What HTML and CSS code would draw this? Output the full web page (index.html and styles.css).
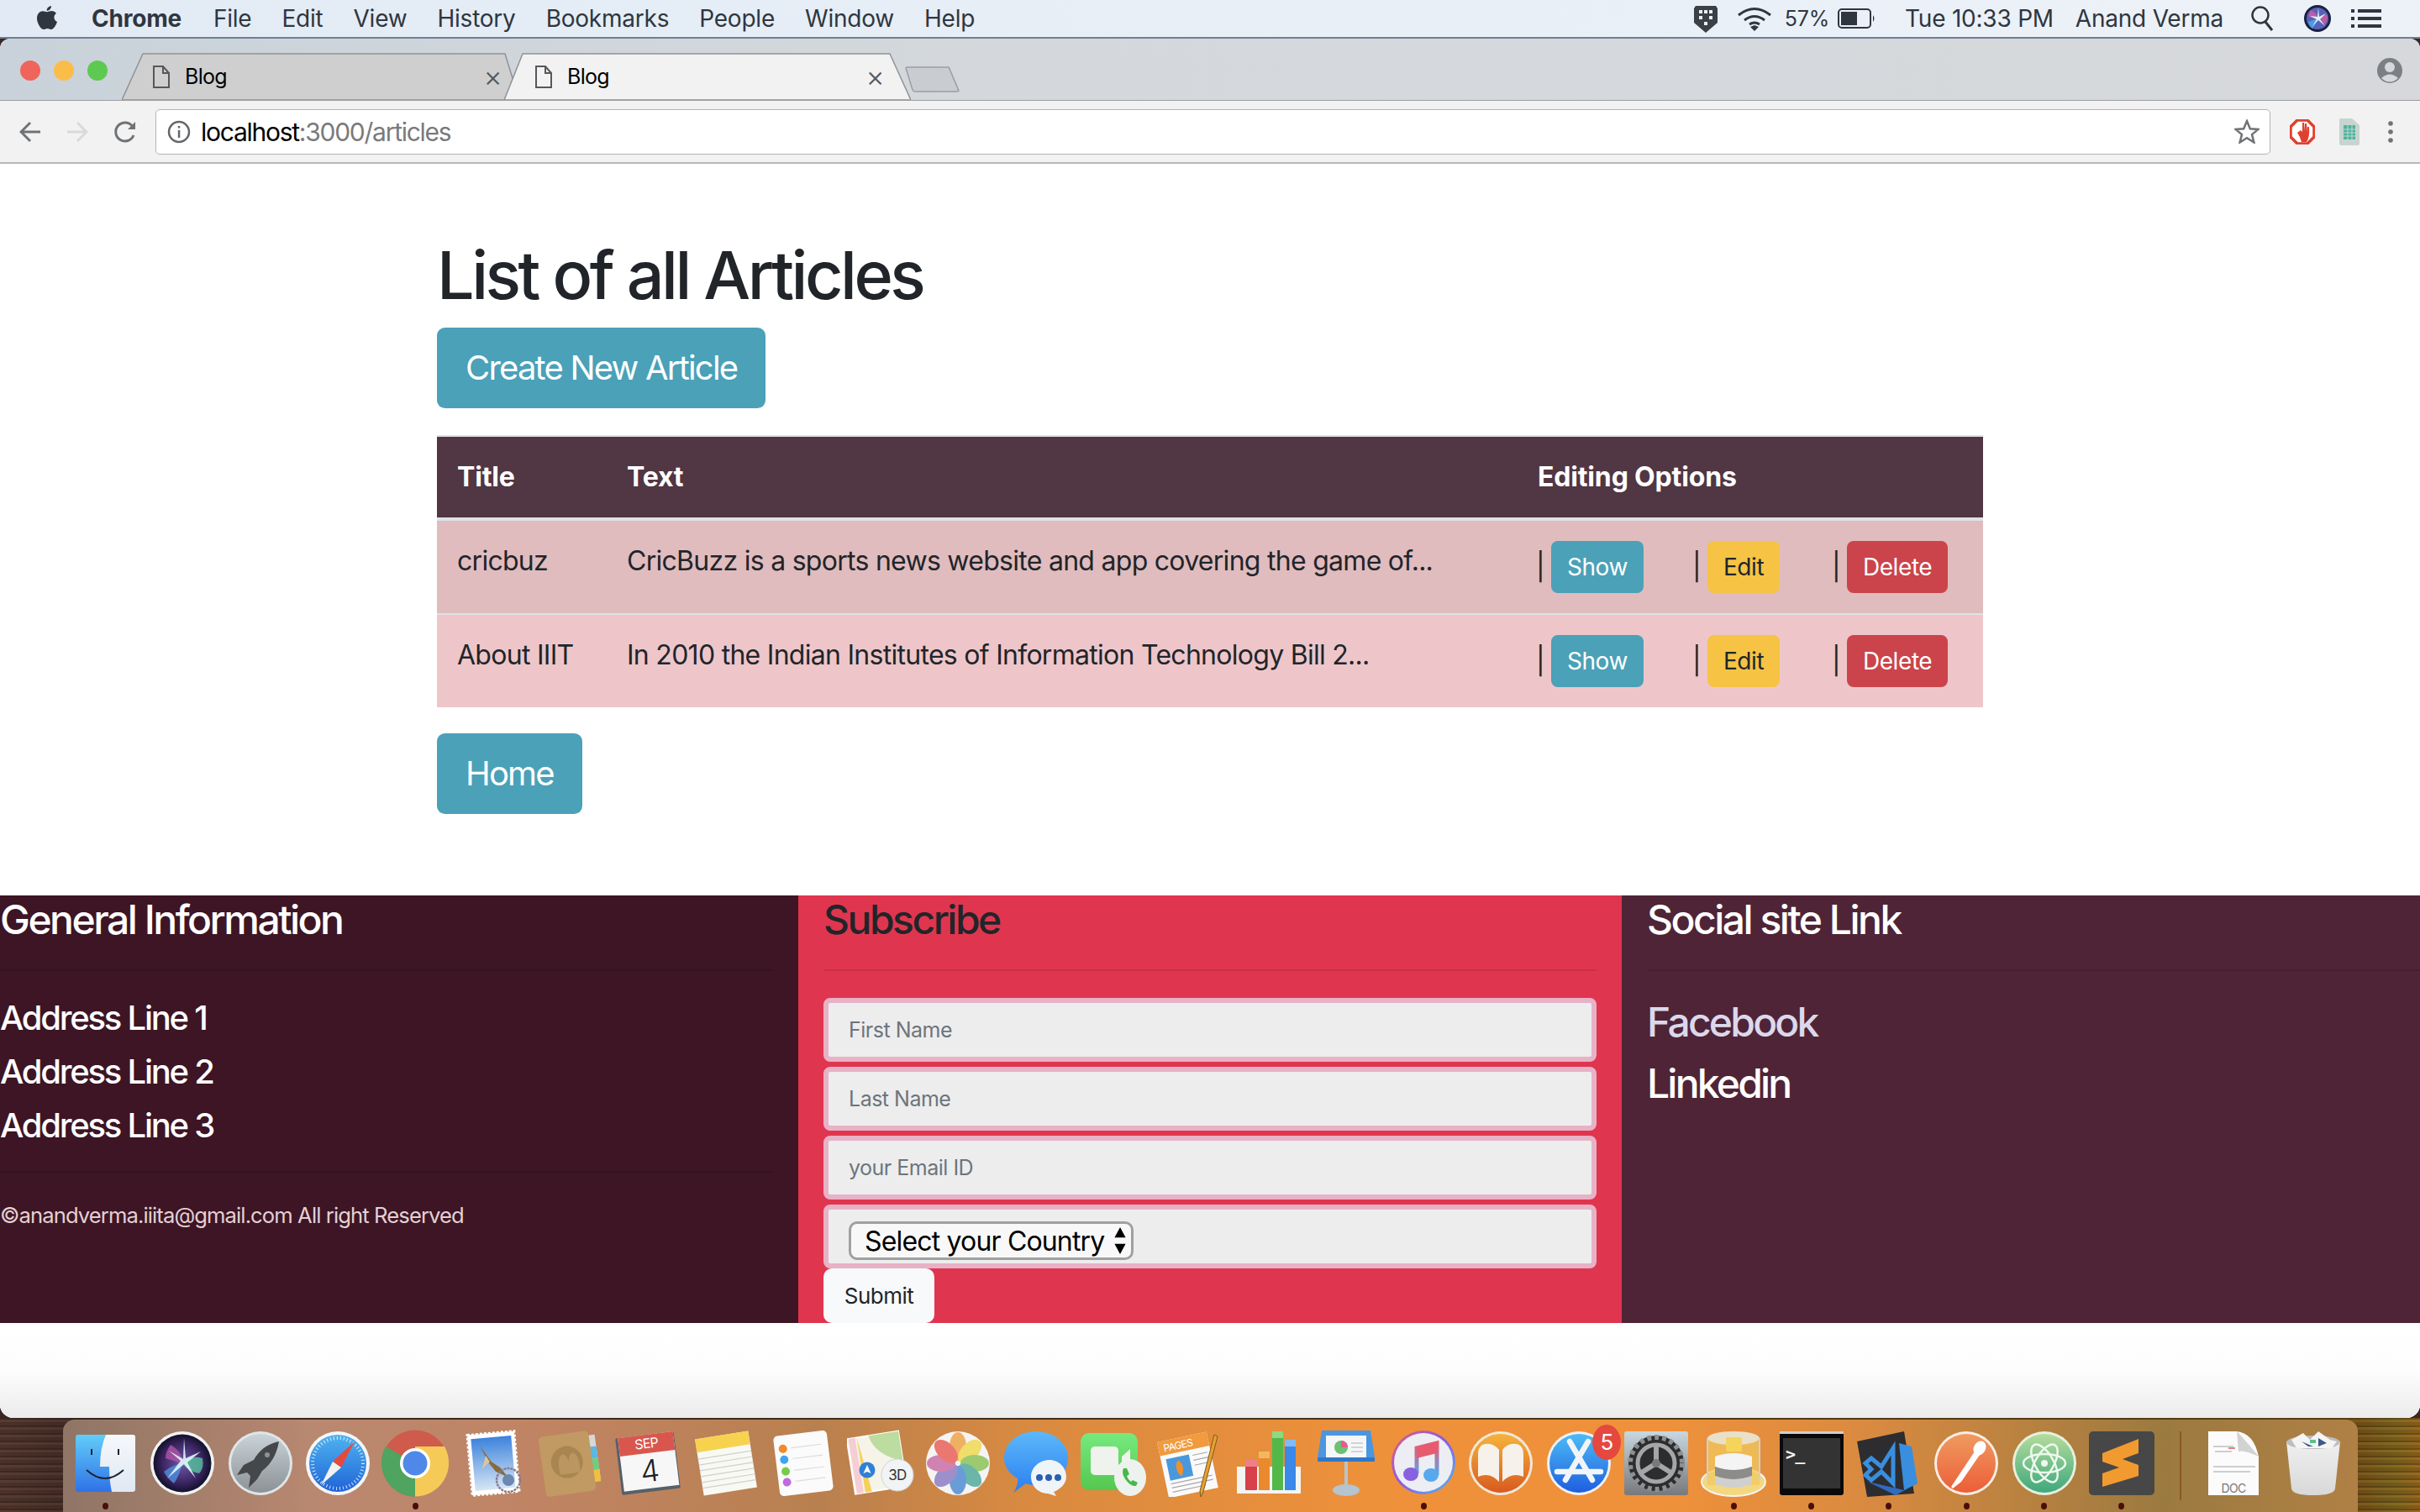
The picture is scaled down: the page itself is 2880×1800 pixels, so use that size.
FILE: index.html
```html
<!DOCTYPE html>
<html lang="en">
<head>
    <meta charset="UTF-8">
    <title>Blog</title>
    <link rel="stylesheet" href="styles.css">
</head>
<body>
    <svg class="defs" width="0" height="0">
        <defs>
            <linearGradient id="gFinder" x1="0" y1="0" x2="0" y2="1"><stop offset="0" stop-color="#62cdf9"/><stop offset="1" stop-color="#2f72e8"/></linearGradient>
            <linearGradient id="gFace" x1="0" y1="0" x2="0" y2="1"><stop offset="0" stop-color="#f6f8fb"/><stop offset="1" stop-color="#dfe8f3"/></linearGradient>
            <radialGradient id="gSiri"><stop offset="0" stop-color="#6e5aa8"/><stop offset=".7" stop-color="#3a2360"/><stop offset="1" stop-color="#10122a"/></radialGradient>
            <linearGradient id="gRocket" x1="0" y1="0" x2="0" y2="1"><stop offset="0" stop-color="#c9d3d8"/><stop offset="1" stop-color="#8c9296"/></linearGradient>
            <linearGradient id="gSafari" x1="0" y1="0" x2="0" y2="1"><stop offset="0" stop-color="#4fb4ef"/><stop offset="1" stop-color="#1f63d8"/></linearGradient>
            <linearGradient id="gSky" x1="0" y1="0" x2="0" y2="1"><stop offset="0" stop-color="#3d83dc"/><stop offset="1" stop-color="#d6e6f5"/></linearGradient>
            <linearGradient id="gMsg" x1="0" y1="0" x2="0" y2="1"><stop offset="0" stop-color="#5cb8fa"/><stop offset="1" stop-color="#2c7ff0"/></linearGradient>
            <linearGradient id="gFace2" x1="0" y1="0" x2="0" y2="1"><stop offset="0" stop-color="#77ea7f"/><stop offset="1" stop-color="#54c84f"/></linearGradient>
            <linearGradient id="gMusic" x1="0" y1="0" x2="0" y2="1"><stop offset="0" stop-color="#ea5a6e"/><stop offset="1" stop-color="#5aa5ee"/></linearGradient>
            <linearGradient id="gRing" x1="0" y1="0" x2="1" y2="1"><stop offset="0" stop-color="#e85a78"/><stop offset=".5" stop-color="#8a5ae8"/><stop offset="1" stop-color="#4ac0ee"/></linearGradient>
            <linearGradient id="gBooks" x1="0" y1="0" x2="0" y2="1"><stop offset="0" stop-color="#f5b33c"/><stop offset="1" stop-color="#d85a20"/></linearGradient>
            <linearGradient id="gStore" x1="0" y1="0" x2="0" y2="1"><stop offset="0" stop-color="#4cbcf5"/><stop offset="1" stop-color="#1f5ee0"/></linearGradient>
            <linearGradient id="gPrefs" x1="0" y1="0" x2="0" y2="1"><stop offset="0" stop-color="#c9d7e0"/><stop offset="1" stop-color="#77797c"/></linearGradient>
            <linearGradient id="gPostman" x1="0" y1="0" x2="0" y2="1"><stop offset="0" stop-color="#f09a60"/><stop offset="1" stop-color="#ec5e38"/></linearGradient>
            <linearGradient id="gAtom" x1="0" y1="0" x2="0" y2="1"><stop offset="0" stop-color="#b4dc9c"/><stop offset="1" stop-color="#3fa87c"/></linearGradient>
            <linearGradient id="gTrash" x1="0" y1="0" x2="0" y2="1"><stop offset="0" stop-color="#f0f0f0"/><stop offset="1" stop-color="#d8d8d8"/></linearGradient>
        </defs>
    </svg>

    <!-- mac menu bar -->
    <header class="menubar">
        <svg class="apple" viewBox="0 0 26 32"><path fill="#2f3640" d="M18 1c.3 3-2.500 6-5.300 5.800C12.300 4 15 1.300 18 1zM13 8.300c1.500 0 3-1.200 5.300-1.200 1.500 0 4.200.6 5.700 3-3.800 2.400-3.300 8 1 10-1 3-4 9-7 9-1.600 0-2.400-1.100-4.500-1.100s-3 1.100-4.600 1.100C5.500 29.100 1 21.500 1 16c0-5.300 3.400-8.700 6.900-8.700 2.200 0 3.800 1 5.100 1z"/></svg>
        <nav class="menu">
            <span class="app-name">Chrome</span>
            <span>File</span>
            <span>Edit</span>
            <span>View</span>
            <span>History</span>
            <span>Bookmarks</span>
            <span>People</span>
            <span>Window</span>
            <span>Help</span>
        </nav>
        <div class="status">
            <svg class="st-shield" viewBox="0 0 30 34"><path fill="#3a4048" d="M3 2h24l2 3v17l-14 12L1 22V5z"/><g fill="#e9eef5"><rect x="7" y="7" width="4" height="4"/><rect x="13" y="7" width="4" height="4"/><rect x="19" y="7" width="4" height="4"/><rect x="7" y="14" width="4" height="4"/><rect x="19" y="14" width="4" height="4"/><rect x="13" y="21" width="4" height="4"/></g></svg>
            <svg class="st-wifi" viewBox="0 0 42 30"><g fill="none" stroke="#2f3640" stroke-width="3"><path d="M2 11q19-15 38 0"/><path d="M9 17q12-9 24 0"/><path d="M15 22q6-4 12 0"/></g><path fill="#2f3640" d="M16 25l5-2 5 2-5 5z"/></svg>
            <span class="st-pct">57%</span>
            <svg class="st-batt" viewBox="0 0 46 24"><rect x="1" y="1" width="38" height="22" rx="4" fill="none" stroke="#2f3640" stroke-width="2"/><rect x="4" y="4" width="19" height="16" fill="#2f3640"/><path fill="#2f3640" d="M42 8q3 4 0 8z"/></svg>
            <span class="st-time">Tue 10:33 PM</span>
            <span class="st-user">Anand Verma</span>
            <svg class="st-search" viewBox="0 0 28 32"><circle cx="12" cy="12" r="9.500" fill="none" stroke="#2f3640" stroke-width="2.500"/><path d="M18 20l8 10" stroke="#2f3640" stroke-width="3"/></svg>
            <svg class="st-siri" viewBox="0 0 32 32"><circle cx="16" cy="16" r="16" fill="#1a2040"/><circle cx="16" cy="16" r="13" fill="#5a62b8"/><path d="M8 6q8 4 8 10-8-1-11-3zM16 16q6-6 12-4 0 8-4 11z" fill="#c05aa8"/><path d="M16 16q-2 8-6 12-4-3-5-8z" fill="#4f9ae0"/><path d="M17 3l1 11 8-4-7 7 6 8-8-7-7 7 5-8-8-4 9 1z" fill="#d8f4f8"/></svg>
            <svg class="st-list" viewBox="0 0 36 22"><g fill="#2f3640"><rect width="4" height="4"/><rect y="9" width="4" height="4"/><rect y="18" width="4" height="4"/><rect x="8" width="28" height="4"/><rect x="8" y="9" width="28" height="4"/><rect x="8" y="18" width="28" height="4"/></g></svg>
        </div>
    </header>

    <div class="window">
        <!-- tab strip -->
        <div class="tabstrip">
            <div class="lights">
                <span class="light red"></span>
                <span class="light yellow"></span>
                <span class="light green"></span>
            </div>
            <div class="tab tab-back">
                <svg class="tab-shape" viewBox="0 0 473 56" preserveAspectRatio="none"><path d="M0 56L25 1H456L473 56z" fill="#cfcfcf" stroke="#8f9296" stroke-width="1.500"/></svg>
                <svg class="page-icon" viewBox="0 0 20 27"><path d="M1 1h11l7 8v17H1z M12 1v8h7" fill="none" stroke="#55585c" stroke-width="2"/></svg>
                <span class="tab-title">Blog</span>
                <span class="tab-close">×</span>
            </div>
            <div class="tab tab-front">
                <svg class="tab-shape" viewBox="0 0 484 56" preserveAspectRatio="none"><path d="M0 56L22 1H459L484 56z" fill="#f2f2f2" stroke="#8f9296" stroke-width="1.500"/></svg>
                <svg class="page-icon" viewBox="0 0 20 27"><path d="M1 1h11l7 8v17H1z M12 1v8h7" fill="none" stroke="#55585c" stroke-width="2"/></svg>
                <span class="tab-title">Blog</span>
                <span class="tab-close">×</span>
            </div>
            <svg class="new-tab" viewBox="0 0 65 31"><path d="M1 2q0-1 2-1h48q2 0 2 2l11 26q0 1-2 1H12q-2 0-3-2z" fill="#c9cdd1" stroke="#9a9da1" stroke-width="1.500"/></svg>
            <svg class="profile" viewBox="0 0 30 30"><circle cx="15" cy="15" r="15" fill="#7c8084"/><circle cx="15" cy="11" r="6" fill="#d6d8db"/><path d="M5 24q10-9 20 0q-10 9-20 0" fill="#d6d8db"/></svg>
        </div>

        <!-- address bar -->
        <div class="toolbar">
            <svg class="tb-back" viewBox="0 0 26 26"><path d="M25 13H3M13 2L2 13l11 11" fill="none" stroke="#6f7377" stroke-width="3"/></svg>
            <svg class="tb-forward" viewBox="0 0 26 26"><path d="M1 13h22M13 2l11 11-11 11" fill="none" stroke="#dadada" stroke-width="3"/></svg>
            <svg class="tb-reload" viewBox="0 0 28 28"><path d="M24 18a11 11 0 1 1-1-10" fill="none" stroke="#6f7377" stroke-width="3"/><path d="M26 2v9h-9z" fill="#6f7377"/></svg>
            <div class="omnibox">
                <svg class="omni-info" viewBox="0 0 28 28"><circle cx="14" cy="14" r="12" fill="none" stroke="#63676b" stroke-width="2.500"/><rect x="12.800" y="12" width="2.500" height="9" fill="#63676b"/><rect x="12.800" y="7" width="2.500" height="2.500" fill="#63676b"/></svg>
                <span class="url"><span class="url-host">localhost</span>:3000/articles</span>
                <svg class="omni-star" viewBox="0 0 30 29"><path d="M15 2l3.800 9.200 9.700.7-7.500 6.200 2.400 9.400-8.400-5.200-8.400 5.200 2.400-9.400-7.500-6.200 9.700-.7z" fill="none" stroke="#6f7377" stroke-width="2.500"/></svg>
            </div>
            <svg class="ext-block" viewBox="0 0 30 30"><path d="M9 1h12l8 8v12l-8 8H9l-8-8V9z" fill="#fff" stroke="#e0402f" stroke-width="3.500"/><path d="M9 16q3 4 5 11h6q4-6 3-18h-2v6l-1-10h-2v9l-1-10h-2v11l-2-2z" fill="#e0402f"/></svg>
            <svg class="ext-sheet" viewBox="0 0 24 32"><path d="M0 2q0-2 2-2h13l9 8v22q0 2-2 2H2q-2 0-2-2z" fill="#c8d4d0"/><g fill="#4cb59e"><rect x="5" y="8" width="14" height="17"/></g><path d="M5 13h14M5 17h14M5 21h14M10 8v17M15 8v17" stroke="#c8d4d0"/></svg>
            <svg class="ext-more" viewBox="0 0 6 26"><circle cx="3" cy="3" r="2.800" fill="#6f7377"/><circle cx="3" cy="13" r="2.800" fill="#6f7377"/><circle cx="3" cy="23" r="2.800" fill="#6f7377"/></svg>
        </div>

        <!-- page -->
        <main class="page">
            <div class="container">
                <h1>List of all Articles</h1>
                <a class="btn btn-lg btn-info">Create New Article</a>
                <table class="articles">
                    <colgroup><col class="col-title"><col class="col-text"><col class="col-options"></colgroup>
                    <thead>
                        <tr><th>Title</th><th>Text</th><th>Editing Options</th></tr>
                    </thead>
                    <tbody>
                        <tr class="row-one">
                            <td>cricbuz</td>
                            <td>CricBuzz is a sports news website and app covering the game of...</td>
                            <td>
                                <div class="options">
                                    <div class="opt opt-show">| <a class="btn btn-info">Show</a></div>
                                    <div class="opt opt-edit">| <a class="btn btn-warning">Edit</a></div>
                                    <div class="opt">| <a class="btn btn-danger">Delete</a></div>
                                </div>
                            </td>
                        </tr>
                        <tr class="row-two">
                            <td>About IIIT</td>
                            <td>In 2010 the Indian Institutes of Information Technology Bill 2...</td>
                            <td>
                                <div class="options">
                                    <div class="opt opt-show">| <a class="btn btn-info">Show</a></div>
                                    <div class="opt opt-edit">| <a class="btn btn-warning">Edit</a></div>
                                    <div class="opt">| <a class="btn btn-danger">Delete</a></div>
                                </div>
                            </td>
                        </tr>
                    </tbody>
                </table>
                <a class="btn btn-lg btn-info">Home</a>
            </div>

            <footer class="site-footer">
                <section class="foot-col foot-info">
                    <h4>General Information</h4>
                    <hr>
                    <h5>Address Line 1</h5>
                    <h5>Address Line 2</h5>
                    <h5>Address Line 3</h5>
                    <hr>
                    <small class="copyright">©anandverma.iiita@gmail.com All right Reserved</small>
                </section>
                <section class="foot-col foot-subscribe">
                    <h4>Subscribe</h4>
                    <hr>
                    <form>
                        <input class="field" type="text" placeholder="First Name">
                        <input class="field" type="text" placeholder="Last Name">
                        <input class="field" type="text" placeholder="your Email ID">
                        <div class="field field-select">
                            <div class="select-wrap">
                                <select><option>Select your Country</option></select>
                                <svg class="select-arrows" viewBox="0 0 14 34"><path d="M7 0l7 13H0zM7 34L0 21h14z" fill="#000"/></svg>
                            </div>
                        </div>
                        <button class="btn-submit" type="button">Submit</button>
                    </form>
                </section>
                <section class="foot-col foot-social">
                    <h4>Social site Link</h4>
                    <hr>
                    <a class="social-link visited">Facebook</a>
                    <a class="social-link">Linkedin</a>
                </section>
            </footer>
            <div class="page-end"></div>
        </main>
    </div>

    <!-- desktop and dock -->
    <div class="desktop">
        <div class="dock">
            <div class="dock-item has-dot">
                <svg viewBox="0 0 80 80"><rect x="5" y="6" width="71" height="68" rx="3" fill="url(#gFinder)"/><path d="M41 6Q34 22 34 44H45Q45 60 48 74H73q3 0 3-3V9q0-3-3-3z" fill="url(#gFace)"/><path d="M24 23v7M56 23v7" stroke="#1b2330" stroke-width="2"/><path d="M18 48Q40 68 62 48" fill="none" stroke="#1b2330" stroke-width="2"/></svg>
            </div>
            <div class="dock-item">
                <svg viewBox="0 0 80 80"><circle cx="40" cy="40" r="38" fill="#f2f2f2"/><circle cx="40" cy="40" r="34.500" fill="url(#gSiri)"/><path d="M26 18q14 8 14 22-14-4-20-6 0-8 6-16z" fill="#b055a8" opacity=".8"/><path d="M40 40q10-10 24-6 2 12-4 18-12-2-20-12z" fill="#58c4a0" opacity=".8"/><path d="M40 40q-4 16-10 24-8-6-12-14 10-8 22-10z" fill="#5090e0" opacity=".8"/><path d="M42 10l2 24 18-8-16 13 10 19-14-17-20 17 16-21-14-12 17 10z" fill="#e0f6fa" opacity=".9"/></svg>
            </div>
            <div class="dock-item">
                <svg viewBox="0 0 80 80"><circle cx="40" cy="40" r="38" fill="#dfe6ea"/><circle cx="40" cy="40" r="35" fill="url(#gRocket)"/><path d="M62 14Q42 18 32 36L20 42l-8 12 12-3 4 4-2 14 10-10 6-10q16-12 20-35z" fill="#45484b"/><circle cx="48" cy="30" r="3" fill="#8c9296"/></svg>
            </div>
            <div class="dock-item">
                <svg viewBox="0 0 80 80"><circle cx="40" cy="40" r="38" fill="#f4f6f8"/><circle cx="40" cy="40" r="34" fill="url(#gSafari)"/><circle cx="40" cy="40" r="30" fill="none" stroke="#fff" stroke-width="4" stroke-dasharray="1 3" opacity=".8"/><path d="M60 14L34 38l10 7z" fill="#e8483c"/><path d="M20 66L34 38l10 7z" fill="#f2f2f2"/></svg>
            </div>
            <div class="dock-item has-dot">
                <svg viewBox="0 0 80 80"><circle cx="40" cy="40" r="39.500" fill="#cf5b4c"/><path d="M40 40L5 20A40 40 0 0 0 40 79.500z" fill="#4fa45f"/><path d="M40 40V79.500A40 40 0 0 0 75 20H40z" fill="#f6ca57"/><circle cx="40" cy="40" r="18" fill="#fff"/><circle cx="40" cy="40" r="14.500" fill="#4f88e8"/></svg>
            </div>
            <div class="dock-item">
                <svg viewBox="0 0 80 80"><g transform="rotate(-5 40 40)"><rect x="12" y="4" width="56" height="72" fill="#fff" stroke="#fff" stroke-width="3" stroke-dasharray="3 2"/><rect x="16" y="9" width="48" height="62" fill="url(#gSky)"/><path d="M26 18l12 20 10 8 8 12-14-8-8-12z" fill="#8a6a3c"/><path d="M32 30l-6 16 10-8z" fill="#d8c6a0"/></g><circle cx="58" cy="60" r="14" fill="none" stroke="#8a7a88" stroke-width="2.500" stroke-dasharray="3 1"/><circle cx="58" cy="60" r="7" fill="#6a88b0"/></svg>
            </div>
            <div class="dock-item">
                <svg viewBox="0 0 80 80"><g transform="rotate(-8 40 40)"><rect x="64" y="10" width="9" height="52" fill="#d8d8d8"/><rect x="64" y="24" width="9" height="14" fill="#5ab8e0"/><rect x="64" y="38" width="9" height="14" fill="#70cc80"/><rect x="64" y="52" width="9" height="14" fill="#f0c040"/><rect x="6" y="4" width="60" height="72" rx="5" fill="#c09a62"/><circle cx="36" cy="38" r="19" fill="#a8864f"/><path d="M26 52q-2-22 6-24 8 2 6 24zM38 52q-2-22 6-24 8 2 6 24z" fill="#bb9660"/></g></svg>
            </div>
            <div class="dock-item">
                <svg viewBox="0 0 80 80"><g transform="rotate(-7 40 40)"><rect x="5" y="6" width="70" height="68" rx="2" fill="#54606a"/><rect x="8" y="6" width="66" height="64" fill="#f7f7f7"/><rect x="8" y="6" width="66" height="22" fill="#d9564e"/><text class="cal-month" x="41" y="22">SEP</text><text class="cal-day" x="41" y="62">4</text></g></svg>
            </div>
            <div class="dock-item">
                <svg viewBox="0 0 80 80"><g transform="rotate(-9 40 40)"><rect x="8" y="6" width="64" height="68" fill="#f9f9f4"/><rect x="8" y="6" width="64" height="16" fill="#f6d24f"/><path d="M8 30h64M8 37h64M8 44h64M8 51h64M8 58h64M8 65h64" stroke="#cfcfcf" stroke-width="1.200"/></g></svg>
            </div>
            <div class="dock-item">
                <svg viewBox="0 0 80 80"><g transform="rotate(-7 40 40)"><rect x="8" y="4" width="64" height="72" rx="5" fill="#fbfbfb"/><circle cx="18" cy="20" r="5" fill="#f08a2a"/><circle cx="18" cy="33" r="5" fill="#3fa4f0"/><circle cx="18" cy="47" r="5" fill="#74cc48"/><circle cx="18" cy="60" r="5" fill="#c06ae0"/><path d="M28 20h36M28 33h36M28 47h36M28 60h36" stroke="#dcdcdc" stroke-width="1.200"/></g></svg>
            </div>
            <div class="dock-item">
                <svg viewBox="0 0 80 80"><g transform="rotate(-9 36 36)"><rect x="4" y="6" width="62" height="66" fill="#f6f3e8" stroke="#fff" stroke-width="2"/><path d="M30 6q4 24 36 36V6z" fill="#bcdca0"/><path d="M16 6l8 66h-8z" fill="#f5d15a"/><path d="M6 6h8v66H6z" fill="#f5cdd4"/></g><circle cx="24" cy="48" r="9.500" fill="#2f80d8"/><path d="M24 42l4.500 10-4.500-2-4.500 2z" fill="#fff"/><circle cx="60" cy="54" r="19" fill="#f1f3f5" stroke="#cfd3d6"/><text class="maps-3d" x="60" y="60">3D</text></svg>
            </div>
            <div class="dock-item">
                <svg viewBox="0 0 80 80"><circle cx="40" cy="40" r="38" fill="#f4f4f4"/><g opacity=".8"><ellipse cx="40" cy="20" rx="10" ry="17" fill="#f0a040"/><ellipse cx="40" cy="20" rx="10" ry="17" fill="#f0d848" transform="rotate(45 40 40)"/><ellipse cx="40" cy="20" rx="10" ry="17" fill="#88c050" transform="rotate(90 40 40)"/><ellipse cx="40" cy="20" rx="10" ry="17" fill="#48a898" transform="rotate(135 40 40)"/><ellipse cx="40" cy="20" rx="10" ry="17" fill="#4888d0" transform="rotate(180 40 40)"/><ellipse cx="40" cy="20" rx="10" ry="17" fill="#8878c0" transform="rotate(225 40 40)"/><ellipse cx="40" cy="20" rx="10" ry="17" fill="#c868a0" transform="rotate(270 40 40)"/><ellipse cx="40" cy="20" rx="10" ry="17" fill="#e85850" transform="rotate(315 40 40)"/></g></svg>
            </div>
            <div class="dock-item">
                <svg viewBox="0 0 80 80"><path d="M40 2c21 0 38 14 38 32S61 66 40 66q-8 0-12-2L13 75q6-9 5-17C8 52 2 44 2 34 2 16 19 2 40 2z" fill="url(#gMsg)"/><path d="M56 36c-12 0-22 9-22 20s9 20 20 20l10 3-3-5c8-3 15-10 15-18 0-11-9-20-20-20z" fill="#eef4f8"/><circle cx="44" cy="57" r="4" fill="#2a5fb0"/><circle cx="55" cy="57" r="4" fill="#2a5fb0"/><circle cx="66" cy="57" r="4" fill="#2a5fb0"/></svg>
            </div>
            <div class="dock-item">
                <svg viewBox="0 0 80 80"><rect x="1" y="4" width="68" height="68" rx="10" fill="url(#gFace2)"/><rect x="13" y="20" width="33" height="34" rx="5" fill="#f0f2ee"/><path d="M50 32l10-9v30l-10-8z" fill="#f0f2ee"/><ellipse cx="60" cy="57" rx="19" ry="22" fill="#eef2ee"/><path d="M52 46q-3 6 3 14t12 7l2-4-6-3-2 2q-4-3-5-7l3-2-3-7z" fill="#46b84a"/></svg>
            </div>
            <div class="dock-item">
                <svg viewBox="0 0 80 80"><g transform="rotate(-12 36 40)"><rect x="6" y="8" width="60" height="68" fill="#fafafa"/><rect x="6" y="8" width="60" height="17" fill="#f19a3e"/><text class="pages-label" x="12" y="21">PAGES</text><rect x="12" y="30" width="28" height="26" fill="#4a98dc"/><path d="M26 34q8 8 0 20q-8-12 0-20z" fill="#f0902c"/><path d="M44 32h18M44 38h18M44 44h18M12 60h50M12 65h50M12 70h40" stroke="#a8a8a8" stroke-width="1.200"/></g><path d="M68 6l4 2-17 66-3 6-1-7z" fill="#e8a030" stroke="#7a5a20"/></svg>
            </div>
            <div class="dock-item">
                <svg viewBox="0 0 80 80"><path d="M2 44h76v32H2z" fill="#f4f4f4"/><rect x="12" y="36" width="14" height="36" rx="1" fill="#d8404a"/><rect x="12" y="36" width="14" height="8" fill="#ee8088"/><rect x="28" y="26" width="13" height="46" fill="#ea8a2c"/><rect x="28" y="26" width="13" height="8" fill="#f2b860"/><rect x="44" y="2" width="13" height="70" fill="#52b848"/><rect x="44" y="2" width="13" height="8" fill="#8ed880"/><rect x="59" y="12" width="13" height="60" fill="#3a88e8"/><rect x="59" y="12" width="13" height="8" fill="#80bcf2"/></svg>
            </div>
            <div class="dock-item">
                <svg viewBox="0 0 80 80"><rect x="38" y="38" width="4" height="36" fill="#b8c4cc"/><ellipse cx="40" cy="72" rx="16" ry="7" fill="#b4c4d0"/><path d="M11 1h58l5 32H6z" fill="#4a96e0"/><rect x="6" y="33" width="68" height="5" rx="1" fill="#2f78c8"/><path d="M16 7h48v26H16z" fill="#f4f6f8"/><circle cx="34" cy="21" r="8" fill="#6cc070"/><path d="M34 21V13a8 8 0 0 1 8 8z" fill="#e85a90"/><path d="M46 16h14M46 21h14M46 26h14" stroke="#b0b0b0"/></svg>
            </div>
            <div class="dock-item has-dot">
                <svg viewBox="0 0 80 80"><circle cx="40" cy="39" r="38" fill="url(#gRing)"/><circle cx="40" cy="39" r="35" fill="#eceef3"/><path d="M32 52V22l24-6v38" fill="none" stroke="url(#gMusic)" stroke-width="5"/><path d="M32 22l24-6v12l-24 6z" fill="#e85a6e"/><ellipse cx="25" cy="53" rx="9" ry="8" fill="#8860e0"/><ellipse cx="49" cy="54" rx="9" ry="8" fill="#58a8ee"/></svg>
            </div>
            <div class="dock-item">
                <svg viewBox="0 0 80 80"><circle cx="40" cy="40" r="38" fill="#efe8da"/><circle cx="40" cy="40" r="35" fill="url(#gBooks)"/><path d="M38 24Q30 14 18 18q-5 3-5 12v26q14-6 25 6z" fill="#f6f1ea"/><path d="M42 24q8-10 20-6 5 3 5 12v26q-14-6-25 6z" fill="#f6f1ea"/></svg>
            </div>
            <div class="dock-item dock-store">
                <svg viewBox="0 0 80 80"><circle cx="40" cy="40" r="38" fill="#eef2f6"/><circle cx="40" cy="40" r="35" fill="url(#gStore)"/><path d="M29 14l27 46M51 14L24 60M14 50h52" stroke="#f2f5f8" stroke-width="6.500" stroke-linecap="round"/></svg>
                <span class="badge">5</span>
            </div>
            <div class="dock-item">
                <svg viewBox="0 0 80 80"><rect x="2" y="2" width="76" height="76" rx="3" fill="url(#gPrefs)"/><circle cx="40" cy="40" r="33" fill="#2c2d2f"/><circle cx="40" cy="40" r="31" fill="none" stroke="#8d8f91" stroke-width="6" stroke-dasharray="5 4"/><circle cx="40" cy="40" r="22" fill="none" stroke="#a4a6a8" stroke-width="5"/><path d="M40 40V18M40 40L21 52M40 40l19 12" stroke="#a4a6a8" stroke-width="6"/><circle cx="40" cy="40" r="5" fill="#78797b"/></svg>
            </div>
            <div class="dock-item has-dot">
                <svg viewBox="0 0 80 80"><ellipse cx="40" cy="62" rx="38" ry="17" fill="#f4d880" stroke="#f4f4f4" stroke-width="2"/><rect x="9" y="10" width="62" height="56" fill="#f0c860" opacity=".75"/><ellipse cx="40" cy="10" rx="31" ry="8" fill="#e8e0c8"/><path d="M9 10v50M71 10v50" stroke="#cfcfcf" stroke-width="2"/><rect x="31" y="9" width="19" height="17" rx="2" fill="#f5d45c"/><path d="M18 32q22-8 44 0v12q-22 8-44 0z" fill="#f4f4f4"/><path d="M18 44q22 8 44 0v11q-22 8-44 0z" fill="#8c8c8c"/><path d="M18 55q22 8 44 0v10q-22 8-44 0z" fill="#d0d0d0"/></svg>
            </div>
            <div class="dock-item has-dot">
                <svg viewBox="0 0 80 80"><rect x="2" y="2" width="76" height="76" rx="3" fill="#0a0a0a"/><rect x="2" y="2" width="76" height="3" fill="#cfcfcf"/><rect x="6" y="10" width="68" height="60" fill="#333"/><text class="term-prompt" x="9" y="36">&gt;_</text></svg>
            </div>
            <div class="dock-item has-dot">
                <svg viewBox="0 0 80 80"><path d="M2 14L58 2l12 74-56 4z" fill="#2d2d30"/><path d="M52 16l15 4 7 44-16 8z" fill="#3a8ede"/><path d="M15 62l43 10 16-8-26 14z" fill="#2f6cc0"/><path d="M12 40l7-6 12 10 14-22v42L31 50 19 60l-7-6 7-7z" fill="none" stroke="#3a8ede" stroke-width="5"/></svg>
            </div>
            <div class="dock-item has-dot">
                <svg viewBox="0 0 80 80"><circle cx="40" cy="40" r="38" fill="#f8ede4"/><circle cx="40" cy="40" r="35" fill="url(#gPostman)"/><path d="M50 26L30 56l-8 12 2 2 10-8 22-32z" fill="#fff"/><ellipse cx="56" cy="22" rx="7" ry="9" fill="#fff" transform="rotate(30 56 22)"/></svg>
            </div>
            <div class="dock-item has-dot">
                <svg viewBox="0 0 80 80"><circle cx="40" cy="40" r="38" fill="#e6efe0"/><circle cx="40" cy="40" r="35" fill="url(#gAtom)"/><g fill="none" stroke="#eef8ee" stroke-width="2.500"><ellipse cx="40" cy="40" rx="25" ry="11"/><ellipse cx="40" cy="40" rx="25" ry="11" transform="rotate(60 40 40)"/><ellipse cx="40" cy="40" rx="25" ry="11" transform="rotate(120 40 40)"/></g><circle cx="40" cy="40" r="4" fill="#eef8ee"/></svg>
            </div>
            <div class="dock-item has-dot">
                <svg viewBox="0 0 80 80"><rect x="1" y="2" width="78" height="76" rx="5" fill="#474747"/><path d="M17 28L60 11V28L41 35L60 42V55L17 68V52L37 45L17 38Z" fill="#f19a30"/></svg>
            </div>
            <div class="dock-sep"></div>
            <div class="dock-item">
                <svg viewBox="0 0 80 80"><path d="M10 2h34q20 2 26 30l0 46H10z" fill="#fbfbfb"/><path d="M44 2q8 8 26 30-18-8-24-6z" fill="#d2d2d2"/><path d="M16 20h24M18 26h20M16 44h50M16 50h44" stroke="#c0c0c0" stroke-width="1.500"/><path d="M34 22h8" stroke="#d06060" stroke-width="1.500"/><text class="doc-label" x="40" y="75">DOC</text></svg>
            </div>
            <div class="dock-item dock-trash">
                <svg viewBox="0 0 80 80"><path d="M8 14l6 56q1 8 26 8t26-8l6-56z" fill="url(#gTrash)"/><ellipse cx="40" cy="15" rx="32" ry="8" fill="#bdbdbd"/><path d="M14 12l14-8 8 8 10-10 14 10 8 2-6 8H20z" fill="#f4f4f4"/><path d="M26 14l8 6h6zM46 10l10 6-10 4z" fill="#3c5a8a"/><path d="M36 12h7v4h-7z" fill="#58c090"/></svg>
            </div>
        </div>
    </div>
</body>
</html>
```

FILE: styles.css
```css
/* whole screen */
html, body {
    margin: 0;
    width: 2880px;
    height: 1800px;
    overflow: hidden;
}

body {
    display: flex;
    flex-direction: column;
    font-family: Inter, "Noto Sans", sans-serif;
    font-size: 32px;
    letter-spacing: -0.0225em;
    background-color: #3a2722;
    color: #212529;
}

.defs {
    position: absolute;
}

svg {
    display: block;
    flex: none;
}

/* mac menu bar */
.menubar {
    display: flex;
    align-items: center;
    height: 44px;
    flex: none;
    border-bottom: 2px solid #6f7f92;
    background: linear-gradient(90deg, #e2ebf5, #edf2f8);
    color: #2f3640;
    font-size: 28px;
    letter-spacing: -0.008em;
}

.apple {
    width: 26px;
    height: 32px;
    margin-left: 43px;
}

.menu {
    display: flex;
    gap: 36px;
    margin-left: 40px;
}

.app-name {
    font-weight: 700;
    margin-right: 2px;
}

.status {
    display: flex;
    align-items: center;
    margin-left: auto;
}

.st-shield { width: 30px; height: 34px; }
.st-wifi { width: 42px; height: 30px; margin-left: 22px; }
.st-pct { margin-left: 15px; font-size: 25px; }
.st-batt { width: 46px; height: 24px; margin-left: 10px; }
.st-time { margin-left: 34px; }
.st-user { margin-left: 26px; }
.st-search { width: 28px; height: 32px; margin-left: 32px; }
.st-siri { width: 32px; height: 32px; margin-left: 36px; }
.st-list { width: 36px; height: 22px; margin-left: 24px; margin-right: 46px; }

/* browser window */
.window {
    display: flex;
    flex-direction: column;
    height: 1642px;
    flex: none;
    overflow: hidden;
    border-radius: 12px 12px 16px 16px;
    background-color: #fff;
}

.tabstrip {
    position: relative;
    display: flex;
    align-items: flex-end;
    height: 74px;
    flex: none;
    background: linear-gradient(90deg, #c9d2da, #d4d8dc 40%, #d6d8db);
    border-bottom: 1px solid #9b9ea1;
    box-sizing: border-box;
}

.lights {
    display: flex;
    gap: 16px;
    align-self: flex-start;
    margin: 26px 0 0 24px;
}

.light {
    width: 24px;
    height: 24px;
    border-radius: 50%;
}

.red { background-color: #f0655b; }
.yellow { background-color: #fbbd4a; }
.green { background-color: #5ec950; }

.tab {
    position: relative;
    display: flex;
    align-items: center;
    height: 56px;
    font-size: 25px;
    color: #000;
}

.tab-back {
    width: 473px;
    margin-left: 17px;
}

.tab-front {
    width: 484px;
    margin-left: -18px;
}

.tab-shape {
    position: absolute;
    top: 0;
    left: 0;
    width: 100%;
    height: 100%;
}

.page-icon {
    position: relative;
    width: 20px;
    height: 27px;
    margin-left: 37px;
}

.tab-title {
    position: relative;
    margin-left: 18px;
}

.tab-close {
    position: relative;
    margin-left: auto;
    color: #55585c;
    font-size: 34px;
    font-weight: 300;
    line-height: 1;
}

.tab-back .tab-close { margin-right: 21px; }
.tab-front .tab-close { margin-right: 32px; }

.new-tab {
    width: 65px;
    height: 31px;
    margin: 0 0 9px -7px;
}

.profile {
    position: absolute;
    top: 23px;
    right: 21px;
    width: 30px;
    height: 30px;
}

.toolbar {
    display: flex;
    align-items: center;
    height: 75px;
    flex: none;
    border-bottom: 2px solid #b8b8b8;
    box-sizing: border-box;
    background-color: #f2f2f2;
}

.tb-back { width: 26px; height: 26px; margin-left: 23px; }
.tb-forward { width: 26px; height: 26px; margin-left: 30px; }
.tb-reload { width: 28px; height: 28px; margin-left: 30px; }

.omnibox {
    display: flex;
    align-items: center;
    width: 2517px;
    height: 54px;
    margin-left: 22px;
    border: 1px solid #b4b4b4;
    border-radius: 5px;
    box-sizing: border-box;
    background-color: #fff;
}

.omni-info { width: 28px; height: 28px; margin-left: 13px; }

.url {
    margin-left: 12px;
    color: #7a7a7a;
    font-size: 30px;
    letter-spacing: -0.042em;
}

.url-host {
    color: #000;
}

.omni-star { width: 30px; height: 29px; margin-left: auto; margin-right: 12px; }
.ext-block { width: 30px; height: 30px; margin-left: 23px; }
.ext-sheet { width: 24px; height: 32px; margin-left: 29px; }
.ext-more { width: 6px; height: 26px; margin-left: 34px; }

/* page */
.page {
    display: flex;
    flex-direction: column;
    flex: 1;
    background-color: #fff;
}

.container {
    width: 1840px;
    margin: 0 auto;
    padding: 84px 0 97px;
}

h1 {
    margin: 0 0 15px;
    font-size: 79px;
    font-weight: 500;
    letter-spacing: -0.0445em;
    line-height: 96px;
}

.btn {
    display: inline-block;
    padding: 0 19px;
    border-radius: 8px;
    font-size: 28px;
    letter-spacing: -0.015em;
    line-height: 62px;
    text-align: center;
}

.btn-lg {
    display: block;
    width: fit-content;
    padding: 0 34px;
    border-radius: 9.600px;
    font-size: 40px;
    letter-spacing: -0.045em;
    line-height: 96px;
}

.btn-info { background-color: #4aa1b8; color: #fff; }
.btn-warning { background-color: #f6c344; color: #212529; }
.btn-danger { background-color: #cb444b; color: #fff; }

.articles {
    width: 100%;
    margin: 32px 0 31px;
    table-layout: fixed;
    border-collapse: separate;
    border-spacing: 0;
}

.col-title { width: 202px; }
.col-text { width: 1084px; }

.articles th {
    padding: 24px;
    border-top: 2px solid #dee2e6;
    border-bottom: 4px solid #dee2e6;
    background-color: #513643;
    color: #fff;
    font-weight: 700;
    letter-spacing: -0.005em;
    line-height: 48px;
    text-align: left;
}

.articles td {
    padding: 24px;
    line-height: 48px;
    vertical-align: top;
}

.row-one td {
    background-color: #e0bcbf;
}

.row-two td {
    border-top: 2px solid #dee2e6;
    background-color: #eec6ca;
}

.options {
    display: flex;
    margin-left: -2px;
}

.opt {
    display: flex;
    align-items: center;
    gap: 8px;
}

.opt-show { width: 186px; }
.opt-edit { width: 166px; }

/* footer */
.site-footer {
    display: grid;
    grid-template-columns: 950px 980px 950px;
    height: 509px;
    flex: none;
    overflow: hidden;
}

.foot-col hr {
    height: 2px;
    margin: 30px 0 32px;
    border: 0;
    background-color: rgba(0, 0, 0, 0.1);
}

h4 {
    margin: 0;
    font-size: 48px;
    font-weight: 500;
    letter-spacing: -0.052em;
    line-height: 58px;
}

h5 {
    margin: 0 0 16px;
    font-size: 40px;
    font-weight: 500;
    letter-spacing: -0.056em;
    line-height: 48px;
}

.foot-info {
    padding-right: 30px;
    background-color: #3d1524;
    color: #fff;
}

.copyright {
    display: block;
    margin-top: -1px;
    color: #e4d0d4;
    font-size: 25.600px;
    letter-spacing: -0.035em;
    line-height: 39px;
}

.foot-subscribe {
    padding: 0 30px;
    background-color: #e0354f;
}

.field {
    display: block;
    width: 100%;
    height: 76px;
    margin: 0 0 6px;
    padding: 0 24px;
    border: 6px solid #e8b2c6;
    border-radius: 8px;
    box-sizing: border-box;
    background-color: #ededed;
    font-family: inherit;
    font-size: 25px;
    letter-spacing: -0.02em;
}

.field::placeholder {
    color: #6c757d;
}

.field-select {
    margin-bottom: 0;
    padding-top: 14px;
}

.select-wrap {
    position: relative;
    width: 339px;
}

select {
    appearance: none;
    display: block;
    width: 100%;
    height: 46px;
    padding: 0 0 0 16px;
    border: 3px solid #a0a0a0;
    border-radius: 10px;
    background-color: #f8f8f8;
    color: #000;
    font-family: inherit;
    font-size: 32px;
    letter-spacing: -0.026em;
}

.select-arrows {
    position: absolute;
    top: 7px;
    right: 8px;
    width: 16px;
    height: 32px;
}

.btn-submit {
    display: block;
    width: 132px;
    height: 65px;
    padding: 0;
    border: 0;
    border-radius: 10px;
    background-color: #f8f9fa;
    color: #212529;
    font-family: inherit;
    font-size: 26px;
    letter-spacing: -0.02em;
}

.foot-social {
    padding-left: 30px;
    background-color: #4f2436;
    color: #fff;
}

.social-link {
    display: block;
    margin-bottom: 15px;
    font-size: 48px;
    font-weight: 500;
    letter-spacing: -0.058em;
    line-height: 58px;
}

.visited {
    color: #dcd8ec;
}

/* the dock shadow falls on the bottom of the window */
.page-end {
    flex: 1;
    background: linear-gradient(180deg, #fff 0, #fdfdfd 50%, #ebebeb 100%);
}

/* desktop and dock */
.desktop {
    flex: 1;
    padding-top: 2px;
    background:
        repeating-linear-gradient(180deg, rgba(0, 0, 0, 0.28) 0 2px, rgba(255, 255, 255, 0.02) 2px 5px, rgba(0, 0, 0, 0.12) 5px 9px),
        linear-gradient(90deg, #55382f 0, #4a3029 75px, #7a5518 2806px, #80661e 2850px, #99661c 2880px);
}

.dock {
    display: flex;
    width: 2731px;
    height: 110px;
    margin-left: 75px;
    padding: 12px 0 0 4px;
    box-sizing: border-box;
    border-radius: 14px 14px 0 0;
    background: linear-gradient(90deg, #8f7566 0, #b98870 300px, #c08464 560px, #b9804f 900px, #d98a40 1150px, #ef913a 1600px, #ef913a 1900px, #d98a40 2150px, #9b7a40 2500px, #b08045 2731px);
}

.dock-item {
    position: relative;
    display: flex;
    flex-direction: column;
    align-items: center;
    width: 92.300px;
    flex: none;
}

.dock-item svg {
    width: 80px;
    height: 80px;
}

.has-dot::after {
    content: "";
    width: 7px;
    height: 8px;
    margin-top: 7px;
    border-radius: 50%;
    background-color: #4a0f08;
}

.dock-sep {
    width: 2px;
    height: 82px;
    margin: 2px 16px 0 23px;
    flex: none;
    background-color: #8a5a20;
}

.dock-trash {
    margin-left: 3px;
}

.badge {
    position: absolute;
    top: -6px;
    right: -4px;
    width: 34px;
    height: 42px;
    border-radius: 50%;
    background-color: #e5483f;
    color: #fff;
    font-size: 26px;
    line-height: 42px;
    text-align: center;
}

.cal-month { fill: #fff; font-size: 16px; text-anchor: middle; }
.cal-day { fill: #222; font-size: 36px; font-weight: 300; text-anchor: middle; }
.maps-3d { fill: #333; font-size: 17px; text-anchor: middle; }
.pages-label { fill: #fff; font-size: 12px; }
.term-prompt { fill: #f4f4f4; font-family: "DejaVu Sans Mono", monospace; font-size: 20px; font-weight: 700; }
.doc-label { fill: #777; font-size: 14px; text-anchor: middle; }
```
